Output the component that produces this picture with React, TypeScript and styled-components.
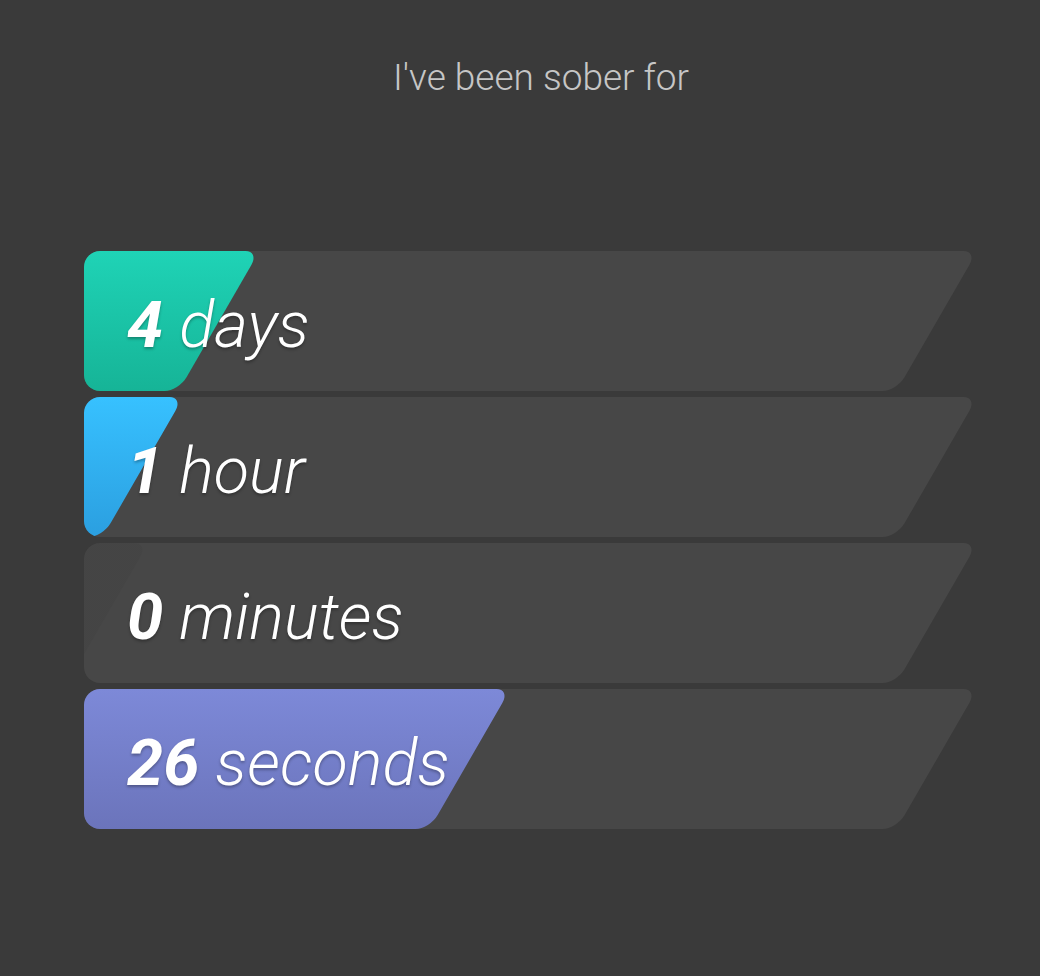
import React from "react";
import styled, { createGlobalStyle } from "styled-components";

const GlobalStyle = createGlobalStyle`
  html, body {
    margin: 0;
    padding: 0;
    background: #3a3a3a;
  }
  body {
    font-family: Roboto, "Noto Sans", sans-serif;
    min-height: 976px;
  }
`;

const Page = styled.main`
  padding: 56px 0 0 84px;
`;

const Title = styled.h1`
  width: 914px;
  margin: 0 0 152px;
  text-align: center;
  font-size: 37px;
  font-weight: 300;
  line-height: normal;
  color: #c6c6c6;
`;

const List = styled.div`
  display: flex;
  flex-direction: column;
  gap: 6px;
  width: 900px;
`;

const Row = styled.div`
  position: relative;
  box-sizing: border-box;
  height: 140px;
  display: flex;
  align-items: center;
  padding: 8px 0 0 43px;
  overflow: hidden;
  border-radius: 16px 0 0 16px;
`;

const Track = styled.div`
  position: absolute;
  top: 0;
  bottom: 0;
  left: -54px;
  width: 907px;
  transform: skewX(-30deg);
  border-radius: 14px;
  background: #474747;
`;

const Fill = styled.div<{ $from: string; $to: string }>`
  height: 100%;
  border-radius: 14px;
  background: linear-gradient(180deg, ${(p) => p.$from}, ${(p) => p.$to});
`;

const Label = styled.div`
  position: relative;
  font-size: 65px;
  font-style: italic;
  color: #ffffff;
  white-space: nowrap;
  text-shadow: 0 2px 3px rgba(0, 0, 0, 0.3);

  b {
    font-weight: 700;
  }

  span {
    font-weight: 300;
  }
`;

interface Unit {
  value: number;
  max: number;
  singular: string;
  plural: string;
  from: string;
  to: string;
}

const units: Unit[] = [
  { value: 4, max: 30, singular: "day", plural: "days", from: "#1fd3b6", to: "#16b497" },
  { value: 1, max: 24, singular: "hour", plural: "hours", from: "#37c1ff", to: "#2b9fe0" },
  { value: 0, max: 60, singular: "minute", plural: "minutes", from: "rgba(0,0,0,0.035)", to: "rgba(0,0,0,0.035)" },
  { value: 26, max: 60, singular: "second", plural: "seconds", from: "#7d89d8", to: "#6b74bb" },
];

const App = () => {
  return (
    <Page>
      <GlobalStyle />
      <Title>I've been sober for</Title>
      <List>
        {units.map((u) => (
          <Row key={u.singular}>
            <Track>
              <Fill
                $from={u.from}
                $to={u.to}
                style={{ width: `${78 + (u.value / u.max) * 835}px` }}
              />
            </Track>
            <Label>
              <b>{u.value}</b> <span>{u.value === 1 ? u.singular : u.plural}</span>
            </Label>
          </Row>
        ))}
      </List>
    </Page>
  );
};

export default App;
